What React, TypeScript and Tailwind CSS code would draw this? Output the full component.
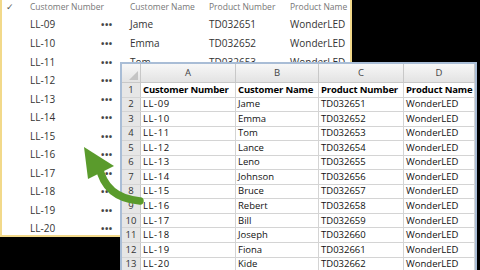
import React from "react";

const rows = [
  ["LL-09", "Jame", "TD032651", "WonderLED"],
  ["LL-10", "Emma", "TD032652", "WonderLED"],
  ["LL-11", "Tom", "TD032653", "WonderLED"],
  ["LL-12", "Lance", "TD032654", "WonderLED"],
  ["LL-13", "Leno", "TD032655", "WonderLED"],
  ["LL-14", "Johnson", "TD032656", "WonderLED"],
  ["LL-15", "Bruce", "TD032657", "WonderLED"],
  ["LL-16", "Rebert", "TD032658", "WonderLED"],
  ["LL-17", "Bill", "TD032659", "WonderLED"],
  ["LL-18", "Joseph", "TD032660", "WonderLED"],
  ["LL-19", "Fiona", "TD032661", "WonderLED"],
  ["LL-20", "Kide", "TD032662", "WonderLED"],
];

const font = { fontFamily: '"Open Sans", "Noto Sans", sans-serif' };

function ListPanel() {
  return (
    <div
      className="w-[352px] h-[237px] bg-white border-l-2 border-r-2 border-b-2 border-[#f2d98a] flex flex-col text-[10px] text-[#333]"
      style={font}
    >
      <div className="h-[15.7px] flex items-center text-[8.5px] text-[#777] shrink-0 whitespace-nowrap">
        <div className="w-[28px] pl-[4px] text-[#555]">✓</div>
        <div className="w-[100px]">Customer Number</div>
        <div className="w-[79px]">Customer Name</div>
        <div className="w-[81px]">Product Number</div>
        <div>Product Name</div>
      </div>
      {rows.map((r) => (
        <div key={r[0]} className="h-[18.55px] flex items-center shrink-0 whitespace-nowrap">
          <div className="w-[28px]" />
          <div className="w-[71px]">{r[0]}</div>
          <div className="w-[29px] text-[9px] font-bold tracking-[0.5px] text-[#444] leading-none">•••</div>
          <div className="w-[79px]">{r[1]}</div>
          <div className="w-[81px]">{r[2]}</div>
          <div>{r[3]}</div>
        </div>
      ))}
    </div>
  );
}

const colW = ["w-[19px]", "w-[95px]", "w-[83px]", "w-[85px]", "w-[71px]"];

function Sheet() {
  return (
    <div
      className="absolute left-[120px] top-[62px] w-[357px] h-[212px] bg-[#dfe7f1] border-2 border-[#a9bdd6] overflow-hidden text-[9.5px] text-[#111]"
      style={font}
    >
      <div className="bg-white">
        <div className="flex h-[19px] bg-gradient-to-b from-[#f7f7f7] to-[#e3e3e3] border-b border-[#c8c8c8] text-[#444]">
          <div className={`${colW[0]} border-r border-[#c8c8c8] relative shrink-0`}>
            <svg className="absolute right-[2px] bottom-[2px]" width="9" height="9" viewBox="0 0 9 9">
              <polygon points="9,0 9,9 0,9" fill="#c4c4c4" />
            </svg>
          </div>
          {["A", "B", "C", "D"].map((l, i) => (
            <div key={l} className={`${colW[i + 1]} shrink-0 border-r border-[#c8c8c8] flex items-center justify-center`}>
              {l}
            </div>
          ))}
        </div>
        {[["Customer Number", "Customer Name", "Product Number", "Product Name"], ...rows].map((r, idx) => (
          <div
            key={idx}
            className={`flex h-[14.56px] border-b border-[#d4d4d4] ${idx === 0 ? "font-bold text-[9.5px] tracking-[-0.15px] text-black" : ""}`}
          >
            <div className={`${colW[0]} shrink-0 bg-[#e6e6e6] border-r border-[#c8c8c8] flex items-center justify-center font-normal text-[9.5px] tracking-normal text-[#333]`}>
              {idx + 1}
            </div>
            {r.map((c, i) => (
              <div
                key={i}
                className={`${colW[i + 1]} shrink-0 border-r border-[#d4d4d4] flex items-center pl-[2px] whitespace-nowrap overflow-hidden ${i === 0 && idx > 0 ? "tracking-[0.6px]" : ""}`}
              >
                {c}
              </div>
            ))}
          </div>
        ))}
      </div>
    </div>
  );
}

function Arrow() {
  return (
    <svg className="absolute left-0 top-0" width="480" height="270" viewBox="0 0 480 270">
      <path d="M99 166 Q105 198 140 201" fill="none" stroke="#5a9b2c" strokeWidth="7.5" strokeLinecap="round" />
      <polygon points="84,147 88,179 114,166" fill="#5a9b2c" />
    </svg>
  );
}

export default function App() {
  return (
    <div className="relative w-[480px] h-[270px] bg-black overflow-hidden">
      <ListPanel />
      <Sheet />
      <Arrow />
    </div>
  );
}
